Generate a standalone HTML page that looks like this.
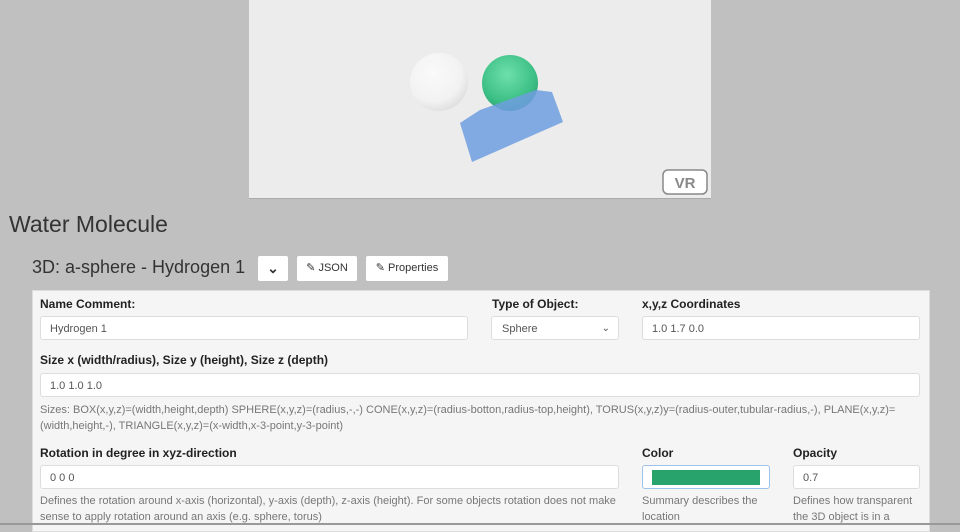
<!DOCTYPE html>
<html><head><style>
body{margin:0;width:960px;height:525px;overflow:hidden;background:#c0c0c0;font-family:"Liberation Sans",sans-serif;position:relative}
.a{position:absolute}
.lbl{position:absolute;font-size:12px;font-weight:bold;color:#222}
.inp{position:absolute;background:#fff;border:1px solid #ddd;border-radius:3px;height:24px;font-size:11px;color:#555;line-height:24px;padding-left:9px;box-sizing:border-box}
.help{position:absolute;font-size:11px;color:#777;line-height:16px}
.btn{position:absolute;background:#fff;border-radius:2px;height:25px;font-size:11px;color:#333;line-height:25px;text-align:center}
</style></head><body>
<div class="a" style="left:249px;top:0;width:462px;height:198px;background:#ececec;border-bottom:1px solid #aaa"></div>
<svg class="a" style="left:0;top:0" width="960" height="200">
<defs>
<radialGradient id="w" cx="0.4" cy="0.35" r="0.7"><stop offset="0" stop-color="#fafafa"/><stop offset="0.7" stop-color="#f2f2f2"/><stop offset="1" stop-color="#dcdcdc"/></radialGradient>
<radialGradient id="g" cx="0.45" cy="0.35" r="0.7"><stop offset="0" stop-color="#6ee0aa"/><stop offset="0.7" stop-color="#3cbf85"/><stop offset="1" stop-color="#2e9e6e"/></radialGradient>
</defs>
<circle cx="439" cy="82" r="29" fill="url(#w)"/>
<circle cx="510" cy="83" r="28" fill="url(#g)"/>
<polygon points="460,123 472,162 563,122 552,92 536,90 480,110" fill="#6f9ee0" opacity="0.85"/>
<rect x="663" y="170" width="44" height="24" rx="5" fill="#fff" stroke="#888" stroke-width="1.5"/>
<text x="685" y="188" font-family="Liberation Sans" font-weight="bold" font-size="15" fill="#888" text-anchor="middle">VR</text>
</svg>
<div class="a" style="left:9px;top:211px;font-size:23px;color:#333">Water Molecule</div>
<div class="a" style="left:32px;top:257px;font-size:18px;color:#333">3D: a-sphere - Hydrogen 1</div>
<div class="btn" style="left:258px;top:256px;width:30px;font-weight:bold;font-size:14px">&#8964;</div>
<div class="btn" style="left:297px;top:256px;width:60px">&#9998; JSON</div>
<div class="btn" style="left:366px;top:256px;width:82px">&#9998; Properties</div>
<div class="a" style="left:32px;top:290px;width:896px;height:240px;background:#f5f5f5;border:1px solid #ddd"></div>
<div class="lbl" style="left:40px;top:297px">Name Comment:</div>
<div class="inp" style="left:40px;top:316px;width:428px">Hydrogen 1</div>
<div class="lbl" style="left:492px;top:297px">Type of Object:</div>
<div class="inp" style="left:491px;top:316px;width:128px;padding-left:10px">Sphere<span style="position:absolute;right:8px;font-size:10px">&#8964;</span></div>
<div class="lbl" style="left:642px;top:297px">x,y,z Coordinates</div>
<div class="inp" style="left:642px;top:316px;width:278px">1.0 1.7 0.0</div>
<div class="lbl" style="left:40px;top:353px">Size x (width/radius), Size y (height), Size z (depth)</div>
<div class="inp" style="left:40px;top:373px;width:880px">1.0 1.0 1.0</div>
<div class="help" style="left:40px;top:402px;width:880px">Sizes: BOX(x,y,z)=(width,height,depth) SPHERE(x,y,z)=(radius,-,-) CONE(x,y,z)=(radius-botton,radius-top,height), TORUS(x,y,z)y=(radius-outer,tubular-radius,-), PLANE(x,y,z)=(width,height,-), TRIANGLE(x,y,z)=(x-width,x-3-point,y-3-point)</div>
<div class="lbl" style="left:40px;top:446px">Rotation in degree in xyz-direction</div>
<div class="inp" style="left:40px;top:465px;width:579px">0 0 0</div>
<div class="help" style="left:40px;top:493px;width:590px">Defines the rotation around x-axis (horizontal), y-axis (depth), z-axis (height). For some objects rotation does not make sense to apply rotation around an axis (e.g. sphere, torus)</div>
<div class="lbl" style="left:642px;top:446px">Color</div>
<div class="inp" style="left:642px;top:465px;width:128px;border-color:#9cc4ea"><div class="a" style="left:9px;top:4px;width:108px;height:15px;background:#27a36b"></div></div>
<div class="help" style="left:642px;top:493px;width:130px">Summary describes the location</div>
<div class="lbl" style="left:793px;top:446px">Opacity</div>
<div class="inp" style="left:793px;top:465px;width:127px">0.7</div>
<div class="help" style="left:793px;top:493px;width:130px">Defines how transparent the 3D object is in a</div>
<div class="a" style="left:0;top:523px;width:960px;height:2px;background:#999"></div>
</body></html>
